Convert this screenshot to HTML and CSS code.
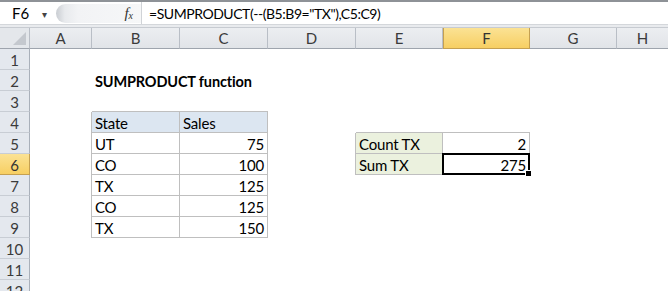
FILE: index.html
```html
<!DOCTYPE html>
<html>
<head>
<meta charset="utf-8">
<link rel="stylesheet" href="styles.css">
</head>
<body>
<div class="app">
  <div class="fbar">
    <div class="namebox"><span class="ref">F6</span><span class="arrow">▾</span></div>
    <div class="splitter"></div>
    <div class="fxzone"><span class="fx"><i>f</i><sub>x</sub></span></div>
    <div class="formula">=SUMPRODUCT(--(B5:B9="TX"),C5:C9)</div>
  </div>
  <div class="band"></div>
  <div class="sheet">
    <div class="corner"><span class="tri"></span></div>
    <div class="ch">A</div><div class="ch">B</div><div class="ch">C</div><div class="ch">D</div>
    <div class="ch">E</div><div class="ch sel">F</div><div class="ch">G</div><div class="ch last">H</div>

    <div class="rh">1</div><div class="c"></div><div class="c"></div><div class="c"></div><div class="c"></div><div class="c"></div><div class="c"></div><div class="c"></div><div class="c"></div>

    <div class="rh">2</div><div class="c"></div><div class="c title">SUMPRODUCT function</div><div class="c"></div><div class="c"></div><div class="c"></div><div class="c"></div><div class="c"></div><div class="c"></div>

    <div class="rh">3</div><div class="c"></div><div class="c bb"></div><div class="c bb"></div><div class="c"></div><div class="c"></div><div class="c"></div><div class="c"></div><div class="c"></div>

    <div class="rh">4</div><div class="c br"></div><div class="c t hd">State</div><div class="c t hd">Sales</div><div class="c"></div><div class="c bb"></div><div class="c bb"></div><div class="c"></div><div class="c"></div>

    <div class="rh">5</div><div class="c br"></div><div class="c t">UT</div><div class="c t num">75</div><div class="c br"></div><div class="c t lab">Count TX</div><div class="c t num">2</div><div class="c"></div><div class="c"></div>

    <div class="rh sel">6</div><div class="c br"></div><div class="c t">CO</div><div class="c t num">100</div><div class="c br"></div><div class="c t lab">Sum TX</div><div class="c t num active">275<span class="handle"></span></div><div class="c"></div><div class="c"></div>

    <div class="rh">7</div><div class="c br"></div><div class="c t">TX</div><div class="c t num">125</div><div class="c"></div><div class="c"></div><div class="c"></div><div class="c"></div><div class="c"></div>

    <div class="rh">8</div><div class="c br"></div><div class="c t">CO</div><div class="c t num">125</div><div class="c"></div><div class="c"></div><div class="c"></div><div class="c"></div><div class="c"></div>

    <div class="rh">9</div><div class="c br"></div><div class="c t">TX</div><div class="c t num">150</div><div class="c"></div><div class="c"></div><div class="c"></div><div class="c"></div><div class="c"></div>

    <div class="rh">10</div><div class="c"></div><div class="c"></div><div class="c"></div><div class="c"></div><div class="c"></div><div class="c"></div><div class="c"></div><div class="c"></div>

    <div class="rh">11</div><div class="c"></div><div class="c"></div><div class="c"></div><div class="c"></div><div class="c"></div><div class="c"></div><div class="c"></div><div class="c"></div>

    <div class="rh">12</div><div class="c"></div><div class="c"></div><div class="c"></div><div class="c"></div><div class="c"></div><div class="c"></div><div class="c"></div><div class="c"></div>
  </div>
</div>
</body>
</html>
```
FILE: styles.css
```css
html, body {
  margin: 0;
  padding: 0;
  background: #ffffff;
  overflow: hidden;
}
.app {
  width: 668px;
  height: 291px;
  overflow: hidden;
  font-family: Lato, "Open Sans", sans-serif;
  font-size: 14px;
  color: #000;
}
.fbar {
  display: flex;
  height: 22px;
  border-top: 2px solid #8e9297;
  border-bottom: 1px solid #d4d7db;
  background: #ffffff;
}
.namebox {
  width: 56px;
  display: flex;
  align-items: center;
  box-sizing: border-box;
  padding-left: 12px;
}
.ref { width: 30px; font-size: 15px; }
.arrow { font-size: 10px; color: #444; margin-top: 1px; }
.splitter {
  width: 22px;
  margin: 2px 0 1px;
  border-radius: 11px 0 0 11px;
  background: linear-gradient(90deg, #c9cdd2 0%, #e8eaed 40%, #f2f3f5 100%);
}
.fxzone {
  width: 63px;
  display: flex;
  align-items: center;
  justify-content: flex-end;
  padding-right: 8px;
  box-sizing: border-box;
  background: linear-gradient(90deg, #f2f3f5, #f6f7f8);
  margin: 2px 0 1px;
}
.fx {
  font-family: "Liberation Serif", serif;
  font-size: 15px;
  color: #333;
}
.fx sub { font-size: 10px; font-style: italic; vertical-align: -1px; }
.formula {
  flex: 1;
  display: flex;
  align-items: center;
  padding-left: 7px;
  border-left: 1px solid #d0d3d7;
  font-size: 14px;
  letter-spacing: -0.45px;
}
.band {
  height: 2px;
  background: #e9ebee;
  border-bottom: 1px solid #c7cbd1;
}
.sheet {
  display: grid;
  grid-template-columns: 30px 62px 88px 88px 88px 87px 87px 87px 51px;
  grid-template-rows: 21px;
  grid-auto-rows: 21px;
}
.corner {
  background: #e4e7eb;
  border-right: 1px solid #b9bec6;
  border-bottom: 1px solid #9ea4ad;
  box-sizing: border-box;
  position: relative;
}
.tri {
  position: absolute;
  right: 3px;
  bottom: 3px;
  width: 0;
  height: 0;
  border-left: 13px solid transparent;
  border-bottom: 13px solid #c4c8ce;
}
.ch {
  background: linear-gradient(#eceef1, #e1e4e8);
  border-right: 1px solid #b9bec6;
  border-bottom: 1px solid #9ea4ad;
  box-sizing: border-box;
  display: flex;
  align-items: center;
  justify-content: center;
  color: #3b3b3b;
  font-size: 15px;
}
.ch.last { border-right: none; }
.ch.sel, .rh.sel {
  background: linear-gradient(#fbe294, #f7cf63);
  border-color: #c5a051;
  color: #333;
}
.ch.sel { border-left: 1px solid #c5a051; border-bottom: 1px solid #c5a051; }
.rh {
  background: #e4e8ee;
  border-right: 1px solid #a9b0ba;
  border-bottom: 1px solid #c8cdd4;
  box-sizing: border-box;
  display: flex;
  align-items: center;
  justify-content: center;
  color: #3b3b3b;
  font-size: 15px;
  padding-top: 1px;
}
.rh.sel { border-right: 1px solid #c5a051; border-bottom: 1px solid #c5a051; }
.c {
  box-sizing: border-box;
  display: flex;
  align-items: center;
  padding: 1px 3px 0;
  white-space: nowrap;
  position: relative;
  font-size: 15px;
  letter-spacing: -0.2px;
}
.title { font-weight: bold; font-size: 14.5px; letter-spacing: -0.15px; }
.t {
  border-right: 1px solid #bfbfbf;
  border-bottom: 1px solid #bfbfbf;
}
.bb { border-bottom: 1px solid #bfbfbf; }
.br { border-right: 1px solid #bfbfbf; }
.hd { background: #dce6f1; }
.lab { background: #ebf1de; }
.num { justify-content: flex-end; }
.active {
  border: 2px solid #000;
  margin: -1px 0 0 -1px;
  padding-right: 2px;
}
.handle {
  position: absolute;
  right: -4px;
  bottom: -4px;
  width: 5px;
  height: 5px;
  background: #000;
  border: 1px solid #fff;
}
```
